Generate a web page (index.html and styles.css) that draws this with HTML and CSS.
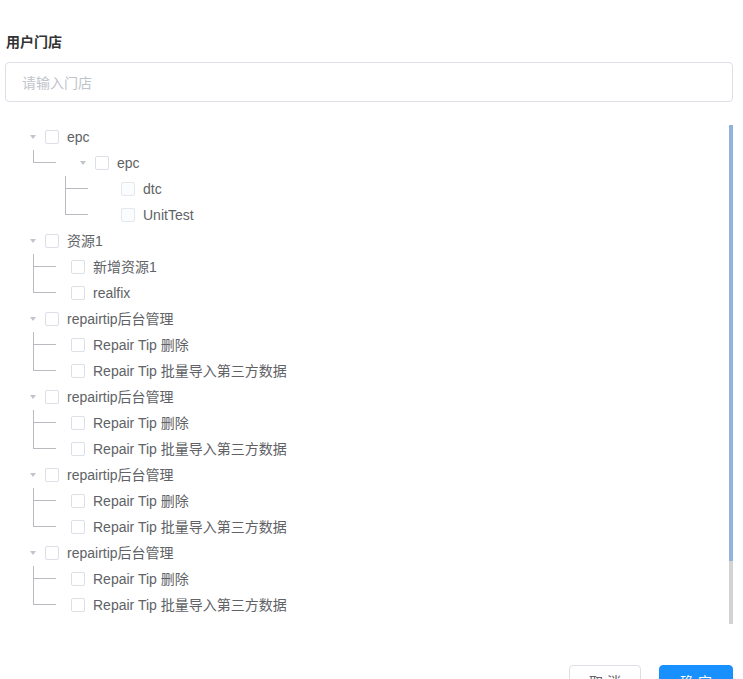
FILE: index.html
```html
<!DOCTYPE html>
<html lang="zh-CN">
<head>
<meta charset="utf-8">
<title>用户门店</title>
<link rel="stylesheet" href="styles.css">
</head>
<body>
<div class="page">
  <div class="label">用户门店</div>
  <div class="input"><span class="placeholder">请输入门店</span></div>
  <div class="tree-wrap">
    <div class="tree">
      <div class="row lv0"><span class="caret"></span><span class="cb"></span><span class="txt">epc</span></div>
      <div class="row lv1p c0 last"><span class="caret"></span><span class="cb"></span><span class="txt">epc</span></div>
      <div class="row lv2 c1"><span class="cb dis"></span><span class="txt">dtc</span></div>
      <div class="row lv2 c1 last"><span class="cb dis"></span><span class="txt">UnitTest</span></div>

      <div class="row lv0"><span class="caret"></span><span class="cb"></span><span class="txt">资源1</span></div>
      <div class="row lv1 c0"><span class="cb"></span><span class="txt">新增资源1</span></div>
      <div class="row lv1 c0 last"><span class="cb"></span><span class="txt">realfix</span></div>

      <div class="row lv0"><span class="caret"></span><span class="cb"></span><span class="txt">repairtip后台管理</span></div>
      <div class="row lv1 c0"><span class="cb"></span><span class="txt">Repair Tip 删除</span></div>
      <div class="row lv1 c0 last"><span class="cb"></span><span class="txt">Repair Tip 批量导入第三方数据</span></div>

      <div class="row lv0"><span class="caret"></span><span class="cb"></span><span class="txt">repairtip后台管理</span></div>
      <div class="row lv1 c0"><span class="cb"></span><span class="txt">Repair Tip 删除</span></div>
      <div class="row lv1 c0 last"><span class="cb"></span><span class="txt">Repair Tip 批量导入第三方数据</span></div>

      <div class="row lv0"><span class="caret"></span><span class="cb"></span><span class="txt">repairtip后台管理</span></div>
      <div class="row lv1 c0"><span class="cb"></span><span class="txt">Repair Tip 删除</span></div>
      <div class="row lv1 c0 last"><span class="cb"></span><span class="txt">Repair Tip 批量导入第三方数据</span></div>

      <div class="row lv0"><span class="caret"></span><span class="cb"></span><span class="txt">repairtip后台管理</span></div>
      <div class="row lv1 c0"><span class="cb"></span><span class="txt">Repair Tip 删除</span></div>
      <div class="row lv1 c0 last"><span class="cb"></span><span class="txt">Repair Tip 批量导入第三方数据</span></div>
    </div>
    <div class="scroll-track"><div class="scroll-thumb"></div></div>
  </div>
  <div class="actions">
    <button class="btn btn-default">取 消</button>
    <button class="btn btn-primary">确 定</button>
  </div>
</div>
</body>
</html>
```
FILE: styles.css
```css
html, body {
  margin: 0;
  padding: 0;
  background: #ffffff;
}

body {
  font-family: "Liberation Sans", Arial, "Noto Sans CJK SC", sans-serif;
  font-size: 14px;
  color: #606266;
}

.page {
  padding: 32px 10px 0 5px;
}

.label {
  padding-left: 1px;
  line-height: 20px;
  font-size: 14px;
  font-weight: bold;
  color: #333333;
}

.input {
  margin-top: 10px;
  height: 38px;
  border: 1px solid #dcdfe6;
  border-radius: 4px;
  display: flex;
  align-items: center;
  padding-left: 16px;
}

.placeholder {
  color: #c0c4cc;
  font-size: 14px;
}

.tree-wrap {
  margin-top: 22px;
  height: 500px;
  display: flex;
  overflow: hidden;
}

.tree {
  flex: 1;
}

.row {
  position: relative;
  height: 26px;
  display: flex;
  align-items: center;
  line-height: 26px;
}

.lv0 { padding-left: 22px; }
.lv1p { padding-left: 72px; }
.lv1 { padding-left: 66px; }
.lv2 { padding-left: 116px; }

.caret {
  width: 12px;
  height: 12px;
  margin-right: 6px;
  display: flex;
  align-items: center;
  justify-content: center;
}

.caret::before {
  content: "";
  width: 0;
  height: 0;
  border-left: 3.5px solid transparent;
  border-right: 3.5px solid transparent;
  border-top: 4px solid #c0c4cc;
}

.cb {
  width: 12px;
  height: 12px;
  border: 1px solid #dcdfe6;
  border-radius: 2px;
  background: #ffffff;
  margin-right: 8px;
  flex: none;
}

.cb.dis {
  border-color: #e4e7ed;
  background: #fbfcfe;
}

.txt {
  white-space: nowrap;
}

/* tree connector lines */
.c0::before,
.c1::before {
  content: "";
  position: absolute;
  top: 0;
  height: 26px;
  border-left: 1px solid #b8bbc0;
}

.c0.last::before,
.c1.last::before {
  height: 13px;
}

.c0::after,
.c1::after {
  content: "";
  position: absolute;
  top: 12px;
  width: 23px;
  border-top: 1px solid #b8bbc0;
}

.c0::before,
.c0::after { left: 28px; }

.c1::before,
.c1::after { left: 60px; }

.scroll-track {
  width: 4px;
  height: 500px;
  margin-top: 1px;
  background: #d3d3d3;
}

.scroll-thumb {
  height: 436px;
  background: #92b2dc;
}

.actions {
  margin-top: 41px;
  display: flex;
  justify-content: flex-end;
  gap: 18px;
  padding-bottom: 20px;
}

.btn {
  height: 32px;
  border-radius: 4px;
  font-family: "Liberation Sans", Arial, "Noto Sans CJK SC", sans-serif;
  font-size: 14px;
  padding: 0;
  cursor: pointer;
}

.btn-default {
  width: 72px;
  background: #ffffff;
  border: 1px solid #dcdfe6;
  color: #606266;
}

.btn-primary {
  width: 74px;
  background: #1890ff;
  border: 1px solid #1890ff;
  color: #ffffff;
}
```
